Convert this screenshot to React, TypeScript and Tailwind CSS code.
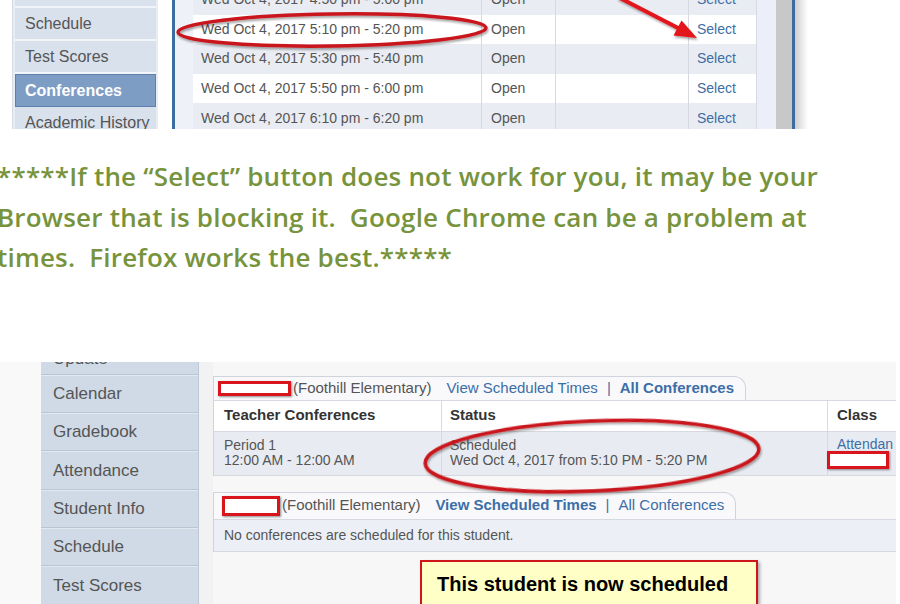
const arial = { fontFamily: '"Liberation Sans", Arial, sans-serif' };

const topRows = [
  '4:50 pm - 5:00 pm',
  '5:10 pm - 5:20 pm',
  '5:30 pm - 5:40 pm',
  '5:50 pm - 6:00 pm',
  '6:10 pm - 6:20 pm',
];

const topNav = ['Student Info', 'Schedule', 'Test Scores', 'Conferences', 'Academic History'];
const bottomNav = ['Update', 'Calendar', 'Gradebook', 'Attendance', 'Student Info', 'Schedule', 'Test Scores'];

function RedBox({ className }: { className: string }) {
  return <span className={`inline-block border-[3px] border-[#d9141c] bg-white shadow-[1px_1px_2px_rgba(0,0,0,0.45)] ${className}`} />;
}

function TopShot() {
  return (
    <div className="relative h-[129px] overflow-hidden bg-white text-[#555]" style={arial}>
      <div className="flex h-full items-start">
        <div className="ml-[12px] -mt-[25px] w-[146px] border-l border-[#d5dbe3] bg-[#e8edf3] px-[2px]">
          {topNav.map((n) =>
            n === 'Conferences' ? (
              <div key={n} className="flex h-[33px] items-center border border-[#5d80ad] bg-[#7e9dc4] pl-[9px] text-[16px] font-bold text-white">
                {n}
              </div>
            ) : (
              <div key={n} className="flex h-[33px] items-center border-b-2 border-[#f1f4f8] bg-[#d9e1ec] pl-[10px] text-[16px]">
                {n}
              </div>
            )
          )}
        </div>
        <div className="w-[14px] self-stretch bg-white" />
        <div className="w-[3px] self-stretch bg-[#3b6da3]" />
        <div className="w-[18px] self-stretch bg-[#eef1f8]" />
        <div className="-mt-[15px] w-[564px] text-[14px]">
          {topRows.map((t, i) => (
            <div key={t} className={`flex h-[29.6px] items-center ${i % 2 === 0 ? 'bg-[#e9ecf2]' : 'bg-white'}`}>
              <div className="w-[288px] pl-[8px]">Wed Oct 4, 2017 {t}</div>
              <div className="flex h-full w-[74px] items-center border-l border-[#d6d9e0] pl-[9px]">Open</div>
              <div className="h-full w-[133px] border-l border-[#d6d9e0]" />
              <div className="flex h-full w-[69px] items-center border-x border-[#d6d9e0] pl-[8px] text-[#3d6ea6]">Select</div>
            </div>
          ))}
        </div>
        <div className="w-[19px] self-stretch bg-[#eceefa]" />
        <div className="w-[16px] self-stretch bg-[#c8c8c8]" />
        <div className="w-[3px] self-stretch bg-[#3b6da3]" />
        <div className="w-[13px] self-stretch bg-gradient-to-r from-[#cfcfcf] to-white" />
      </div>
      <svg className="pointer-events-none absolute left-0 top-0" width="900" height="129">
        <defs>
          <filter id="sh1" x="-10%" y="-50%" width="120%" height="200%">
            <feDropShadow dx="1" dy="2" stdDeviation="1.2" floodColor="#000" floodOpacity="0.35" />
          </filter>
        </defs>
        <g filter="url(#sh1)">
          <ellipse cx="332" cy="30" rx="154" ry="16" fill="none" stroke="#c9151c" strokeWidth="3.5" transform="rotate(-0.8 332 30)" />
          <line x1="618" y1="-3" x2="680" y2="29" stroke="#e3121b" strokeWidth="4" />
          <polygon points="697,38 681.5,20.5 673.5,35.5" fill="#e3121b" />
        </g>
      </svg>
    </div>
  );
}

function Tab({ bold, width, red, h }: { bold: 'view' | 'all'; width: string; red: string; h: string }) {
  return (
    <div className={`flex items-center rounded-tr-[12px] border-r border-t border-[#cfd4dc] bg-[#f9f9fb] text-[15px] text-[#555] ${width} ${h}`}>
      <RedBox className={red} />
      <span className="ml-[2px]">(Foothill Elementary)</span>
      <span className={`ml-[15px] text-[#3c6ea7] ${bold === 'view' ? 'font-bold' : ''}`}>View Scheduled Times</span>
      <span className="mx-[9px] text-[#3c6ea7]">|</span>
      <span className={`text-[#3c6ea7] ${bold === 'all' ? 'font-bold' : ''}`}>All Conferences</span>
    </div>
  );
}

function BottomShot() {
  return (
    <div className="relative h-[242px] w-[896px] overflow-hidden bg-[#f7f7f7] text-[#555]" style={arial}>
      <div className="flex h-full items-start">
        <div className="w-[41px] self-stretch bg-[#f9f9f9]" />
        <div className="-mt-[19px] w-[158px] border-r border-[#bcc8d5] bg-[#cfdae6]">
          {bottomNav.map((n, i) => (
            <div
              key={n}
              className={`flex items-center border-b border-t border-b-[#b8c5d3] border-t-[#e3e9f0] pl-[12px] text-[17px] ${i === 0 ? 'h-[32.3px]' : 'h-[38.3px]'}`}
            >
              {n}
            </div>
          ))}
        </div>
        <div className="w-[14px] self-stretch bg-[#f2f2f2]" />
        <div className="flex-1 self-stretch pt-[14px]">
          <div className="border-l border-[#cfd4dc]">
            <Tab bold="all" width="w-[532px]" red="ml-[4px] h-[15px] w-[73px]" h="h-[24px]" />
            <div className="flex h-[31px] items-center border-t border-[#d6dae0] bg-white text-[15px] font-bold text-[#333]">
              <div className="w-[227px] pl-[10px]">Teacher Conferences</div>
              <div className="flex h-full w-[386px] items-center border-l border-[#d6dae0] pl-[8px]">Status</div>
              <div className="flex h-full flex-1 items-center border-l border-[#d6dae0] pl-[9px]">Class</div>
            </div>
            <div className="flex h-[45px] border-y border-[#d6dae0] bg-[#e8ecf2] text-[14px] leading-[15px]">
              <div className="flex w-[227px] flex-col justify-center pl-[10px]">
                <span>Period 1</span>
                <span>12:00 AM - 12:00 AM</span>
              </div>
              <div className="flex w-[386px] flex-col justify-center border-l border-[#d6dae0] pl-[8px]">
                <span>Scheduled</span>
                <span>Wed Oct 4, 2017 from 5:10 PM - 5:20 PM</span>
              </div>
              <div className="flex flex-1 flex-col justify-center border-l border-[#d6dae0] pl-[9px]">
                <span className="text-[#3c6ea7]">Attendan</span>
                <RedBox className="-ml-[10px] -mt-[1px] h-[18px] w-[62px]" />
              </div>
            </div>
          </div>
          <div className="mt-[16px] border-l border-[#cfd4dc]">
            <Tab bold="view" width="w-[522px]" red="ml-[8px] h-[20px] w-[58px]" h="h-[27px]" />
            <div className="flex h-[33px] items-center border-y border-[#d6dae0] bg-[#eceff5] pl-[10px] text-[14px]">
              No conferences are scheduled for this student.
            </div>
          </div>
          <div className="ml-[207px] mt-[8px] h-[60px] w-[338px] border-2 border-[#d0141c] bg-[#ffffc6] pl-[15px] pt-[10px] text-[20px] font-bold leading-[24px] text-black shadow-[2px_2px_3px_rgba(0,0,0,0.3)]">
            This student is now scheduled
          </div>
        </div>
      </div>
      <svg className="pointer-events-none absolute left-0 top-0" width="896" height="242">
        <defs>
          <filter id="sh2" x="-10%" y="-50%" width="120%" height="200%">
            <feDropShadow dx="1" dy="2" stdDeviation="1.2" floodColor="#000" floodOpacity="0.35" />
          </filter>
        </defs>
        <ellipse cx="592" cy="94" rx="167" ry="35" fill="none" stroke="#c9151c" strokeWidth="3.5" transform="rotate(-2.5 592 94)" filter="url(#sh2)" />
      </svg>
    </div>
  );
}

export default function App() {
  return (
    <div className="h-[604px] w-[900px] overflow-hidden bg-white">
      <TopShot />
      <div
        className="-ml-[3px] mt-[27px] text-[26px] font-semibold leading-[40.5px] tracking-[0.2px] text-[#77933c]"
        style={{ fontFamily: '"Open Sans", Lato, sans-serif' }}
      >
        <div className="whitespace-pre">*****If the “Select” button does not work for you, it may be your</div>
        <div className="whitespace-pre">Browser that is blocking it.  Google Chrome can be a problem at</div>
        <div className="whitespace-pre">times.  Firefox works the best.*****</div>
      </div>
      <div className="mt-[84px]">
        <BottomShot />
      </div>
    </div>
  );
}
